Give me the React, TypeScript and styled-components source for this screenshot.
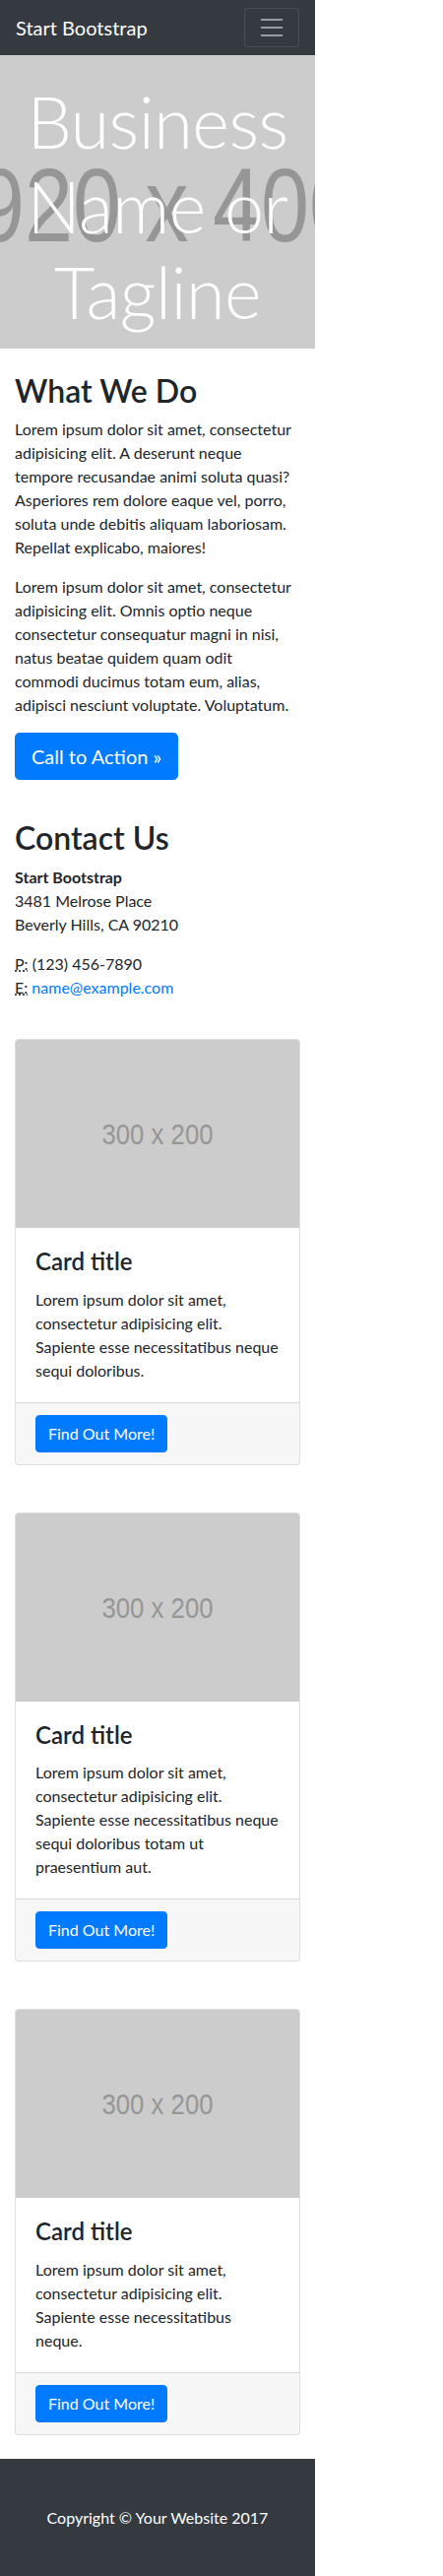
import React from "react";
import styled, { createGlobalStyle } from "styled-components";

const GlobalStyle = createGlobalStyle`
  html, body {
    margin: 0;
    padding: 0;
    background: #fff;
  }
  body {
    font-family: Lato, "Noto Sans", "Liberation Sans", sans-serif;
    font-size: 16px;
    line-height: 1.5;
    color: #212529;
  }
  *, *::before, *::after { box-sizing: border-box; }
`;

const Page = styled.div`
  width: 320px;
`;

const Navbar = styled.nav`
  height: 56px;
  padding: 8px 16px;
  background: #343a40;
  display: flex;
  align-items: center;
  justify-content: space-between;
`;

const Brand = styled.a`
  color: #fff;
  font-size: 20px;
  line-height: 30px;
  text-decoration: none;
`;

const Toggler = styled.button`
  width: 56px;
  height: 40px;
  padding: 4px 12px;
  background: transparent;
  border: 1px solid rgba(255, 255, 255, 0.1);
  border-radius: 4px;
  display: flex;
  align-items: center;
  justify-content: center;
`;

const Hero = styled.header`
  position: relative;
  height: 298px;
  background: #ccc;
  overflow: hidden;
`;

const HeroArt = styled.svg`
  position: absolute;
  inset: 0;
  width: 100%;
  height: 100%;
`;

const HeroTitle = styled.h1`
  position: relative;
  margin: 24px 15px 0;
  font-size: 72px;
  font-weight: 300;
  line-height: 1.2;
  letter-spacing: -0.5px;
  color: #fff;
  text-align: center;
`;

const Container = styled.main`
  padding: 0 15px;
`;

const Section = styled.section`
  display: flow-root;
`;

const Heading = styled.h2`
  margin: 24px 0 8px;
  font-size: 32px;
  font-weight: 600;
  line-height: 1.2;
`;

const Para = styled.p`
  margin: 0 0 16px;
`;

const Button = styled.a<{ $large?: boolean }>`
  display: inline-block;
  vertical-align: middle;
  background: #007bff;
  color: #fff;
  border: 1px solid #007bff;
  text-decoration: none;
  font-size: ${(p) => (p.$large ? "20px" : "16px")};
  line-height: 1.5;
  padding: ${(p) => (p.$large ? "8px 16px" : "6px 12px")};
  border-radius: ${(p) => (p.$large ? "4.8px" : "4px")};
`;

const ButtonRow = styled.div`
  display: flex;
  margin: 0 0 16px;
`;

const Address = styled.address`
  font-style: normal;
  margin: 0 0 16px;
`;

const Line = styled.div``;

const Abbr = styled.abbr`
  text-decoration: underline dotted;
  cursor: help;
`;

const Link = styled.a`
  color: #007bff;
  text-decoration: none;
`;

const CardList = styled.div`
  display: flex;
  flex-direction: column;
  gap: 48px;
  padding: 24px 0;
`;

const Card = styled.article`
  border: 1px solid rgba(0, 0, 0, 0.125);
  border-radius: 4px;
  overflow: hidden;
  background: #fff;
`;

const CardImage = styled.svg`
  display: block;
  width: 100%;
  height: 191px;
`;

const CardBody = styled.div`
  padding: 20px;
`;

const CardTitle = styled.h4`
  margin: 0 0 12px;
  font-size: 24px;
  font-weight: 600;
  line-height: 1.2;
`;

const CardText = styled.p`
  margin: 0;
`;

const CardFooter = styled.div`
  display: flex;
  padding: 12px 20px;
  background: rgba(0, 0, 0, 0.03);
  border-top: 1px solid rgba(0, 0, 0, 0.125);
`;

const Footer = styled.footer`
  background: #343a40;
  padding: 48px 15px;
  color: #fff;
  text-align: center;
`;

const FooterText = styled.p`
  margin: 0;
`;

const cards = [
  "Lorem ipsum dolor sit amet, consectetur adipisicing elit. Sapiente esse necessitatibus neque sequi doloribus.",
  "Lorem ipsum dolor sit amet, consectetur adipisicing elit. Sapiente esse necessitatibus neque sequi doloribus totam ut praesentium aut.",
  "Lorem ipsum dolor sit amet, consectetur adipisicing elit. Sapiente esse necessitatibus neque.",
];

const TogglerIcon = () => (
  <svg width="30" height="30" viewBox="0 0 30 30">
    <path
      d="M4 7h22M4 15h22M4 23h22"
      stroke="rgba(255,255,255,0.5)"
      strokeWidth="2"
      strokeLinecap="butt"
    />
  </svg>
);

export default function App() {
  return (
    <Page>
      <GlobalStyle />
      <Navbar>
        <Brand href="#">Start Bootstrap</Brand>
        <Toggler aria-label="Toggle navigation">
          <TogglerIcon />
        </Toggler>
      </Navbar>
      <Hero>
        <HeroArt viewBox="0 0 320 298" preserveAspectRatio="none">
          <text
            x="-73"
            y="189"
            fontFamily="'Liberation Sans', Arial, sans-serif"
            fontSize="105"
            fill="#969696"
            textLength="436"
            lengthAdjust="spacingAndGlyphs"
          >
            1920 x 400
          </text>
        </HeroArt>
        <HeroTitle>Business Name or Tagline</HeroTitle>
      </Hero>
      <Container>
        <Section>
          <Heading>What We Do</Heading>
          <Para>
            Lorem ipsum dolor sit amet, consectetur adipisicing elit. A deserunt neque tempore
            recusandae animi soluta quasi? Asperiores rem dolore eaque vel, porro, soluta unde
            debitis aliquam laboriosam. Repellat explicabo, maiores!
          </Para>
          <Para>
            Lorem ipsum dolor sit amet, consectetur adipisicing elit. Omnis optio neque consectetur
            consequatur magni in nisi, natus beatae quidem quam odit
            <br />
            commodi ducimus totam eum, alias, adipisci nesciunt voluptate. Voluptatum.
          </Para>
          <ButtonRow>
            <Button $large href="#">
              Call to Action &raquo;
            </Button>
          </ButtonRow>
        </Section>
        <Section>
          <Heading>Contact Us</Heading>
          <Address>
            <Line>
              <strong>Start Bootstrap</strong>
            </Line>
            <Line>3481 Melrose Place</Line>
            <Line>Beverly Hills, CA 90210</Line>
          </Address>
          <Address>
            <Line>
              <Abbr title="Phone">P:</Abbr> (123) 456-7890
            </Line>
            <Line>
              <Abbr title="Email">E:</Abbr> <Link href="#">name@example.com</Link>
            </Line>
          </Address>
        </Section>
        <CardList>
          {cards.map((text, i) => (
            <Card key={i}>
              <CardImage viewBox="0 0 288 191">
                <rect width="288" height="191" fill="#ccc" />
                <text
                  x="144"
                  y="106"
                  textAnchor="middle"
                  fontFamily="'Liberation Sans', Arial, sans-serif"
                  fontSize="30"
                  fill="#969696"
                  textLength="113"
                  lengthAdjust="spacingAndGlyphs"
                >
                  300 x 200
                </text>
              </CardImage>
              <CardBody>
                <CardTitle>Card title</CardTitle>
                <CardText>{text}</CardText>
              </CardBody>
              <CardFooter>
                <Button href="#">Find Out More!</Button>
              </CardFooter>
            </Card>
          ))}
        </CardList>
      </Container>
      <Footer>
        <FooterText>Copyright &copy; Your Website 2017</FooterText>
      </Footer>
    </Page>
  );
}
